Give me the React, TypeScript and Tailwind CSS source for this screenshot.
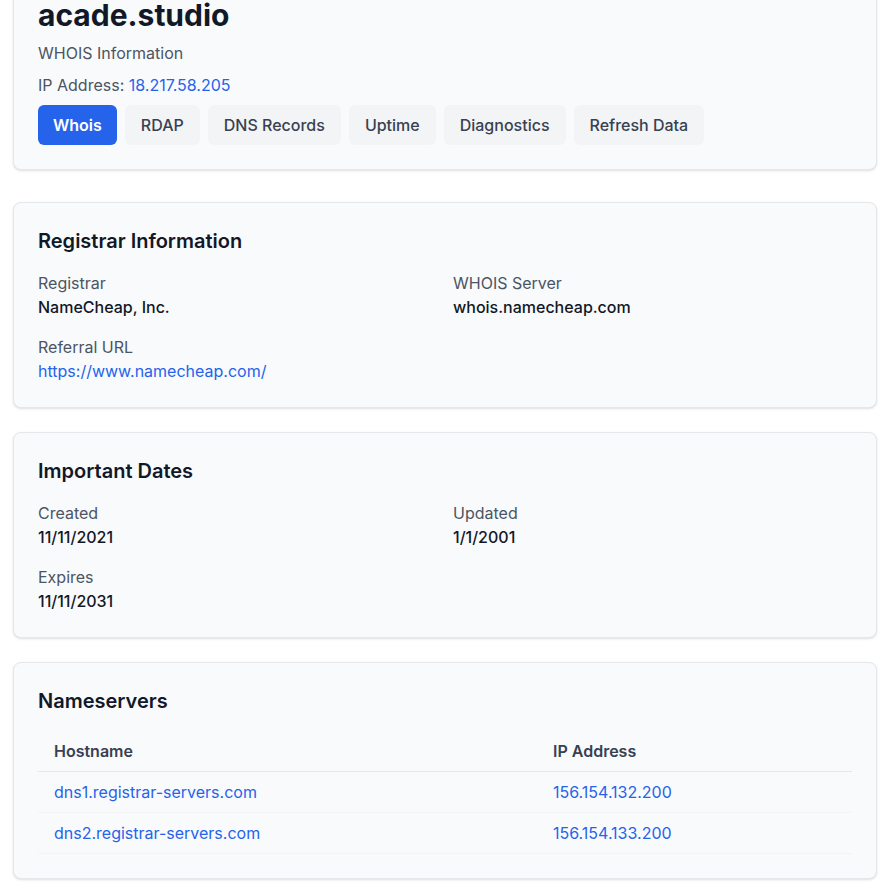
const tabs = ["Whois", "RDAP", "DNS Records", "Uptime", "Diagnostics", "Refresh Data"];

function Field({ label, value, link }: { label: string; value: string; link?: boolean }) {
  return (
    <div>
      <div className="text-base leading-6 text-[#4b5563]">{label}</div>
      <div className={link ? "text-base leading-6 text-[#2563eb]" : "text-base leading-6 font-medium text-[#111827]"}>
        {value}
      </div>
    </div>
  );
}

function Card({ title, children }: { title?: string; children: React.ReactNode }) {
  return (
    <section className="rounded-lg border border-[#e5e7eb] bg-[#f9fafb] p-6 shadow-sm">
      {title && <h2 className="mb-4 text-xl leading-7 font-semibold text-[#111827]">{title}</h2>}
      {children}
    </section>
  );
}

export default function App() {
  return (
    <div className="min-h-screen bg-white pl-[13px] pr-[11px] pb-6 font-['Inter','Liberation_Sans',sans-serif]">
      <div className="-mt-[28px] mb-8">
        <Card>
          <h1 className="text-3xl leading-9 font-bold text-[#111827]">acade.studio</h1>
          <p className="mt-2 text-base leading-6 text-[#4b5563]">WHOIS Information</p>
          <p className="mt-2 text-base leading-6 text-[#4b5563]">
            IP Address: <span className="text-[#2563eb]">18.217.58.205</span>
          </p>
          <div className="mt-2 flex gap-2">
            {tabs.map((t, i) => (
              <button
                key={t}
                className={
                  i === 0
                    ? "rounded-md bg-[#2563eb] px-[15px] py-2 text-base leading-6 font-semibold text-white"
                    : "rounded-md bg-[#f3f4f6] px-4 py-2 text-base leading-6 font-medium text-[#374151]"
                }
              >
                {t}
              </button>
            ))}
          </div>
        </Card>
      </div>

      <div className="flex flex-col gap-6">
        <Card title="Registrar Information">
          <div className="grid grid-cols-2 gap-4">
            <Field label="Registrar" value="NameCheap, Inc." />
            <Field label="WHOIS Server" value="whois.namecheap.com" />
            <Field label="Referral URL" value="https://www.namecheap.com/" link />
          </div>
        </Card>

        <Card title="Important Dates">
          <div className="grid grid-cols-2 gap-4">
            <Field label="Created" value="11/11/2021" />
            <Field label="Updated" value="1/1/2001" />
            <Field label="Expires" value="11/11/2031" />
          </div>
        </Card>

        <Card title="Nameservers">
          <table className="w-full border-collapse text-left">
            <thead>
              <tr className="border-b border-[#e5e7eb]">
                <th className="w-[499px] px-4 py-2 text-base leading-6 font-semibold text-[#374151]">Hostname</th>
                <th className="px-4 py-2 text-base leading-6 font-semibold text-[#374151]">IP Address</th>
              </tr>
            </thead>
            <tbody>
              {[
                ["dns1.registrar-servers.com", "156.154.132.200"],
                ["dns2.registrar-servers.com", "156.154.133.200"],
              ].map(([h, ip]) => (
                <tr key={h} className="border-b border-[#f3f4f6]">
                  <td className="px-4 py-2 text-base leading-6 text-[#2563eb]">{h}</td>
                  <td className="px-4 py-2 text-base leading-6 text-[#2563eb]">{ip}</td>
                </tr>
              ))}
            </tbody>
          </table>
        </Card>
      </div>
    </div>
  );
}
